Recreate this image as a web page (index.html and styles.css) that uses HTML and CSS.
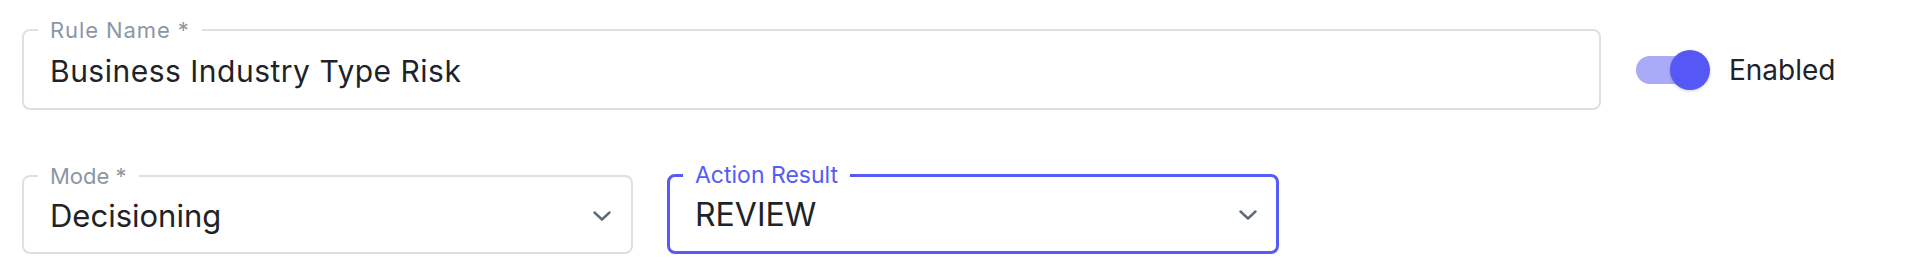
FILE: index.html
```html
<!DOCTYPE html>
<html lang="en">
<head>
  <meta charset="UTF-8">
  <meta name="viewport" content="width=device-width, initial-scale=1.0">
  <title>Rule settings</title>
  <link rel="stylesheet" href="styles.css">
</head>
<body>
  <div class="form">
    <div class="row">
      <fieldset class="field field-name">
        <legend>Rule Name *</legend>
        <div class="field-body">
          <span class="value">Business Industry Type Risk</span>
        </div>
      </fieldset>
      <label class="switch">
        <span class="track"><span class="knob"></span></span>
        <span class="switch-label">Enabled</span>
      </label>
    </div>

    <div class="row row-selects">
      <fieldset class="field field-select">
        <legend>Mode *</legend>
        <div class="field-body">
          <span class="value">Decisioning</span>
          <svg class="chevron" width="18" height="10" viewBox="0 0 18 10"><path d="M1.5 1.5 L9 8.5 L16.5 1.5" fill="none" stroke="#5f6b7a" stroke-width="2.4" stroke-linecap="round" stroke-linejoin="round"/></svg>
        </div>
      </fieldset>
      <fieldset class="field field-select focused">
        <legend>Action Result</legend>
        <div class="field-body">
          <span class="value">REVIEW</span>
          <svg class="chevron" width="18" height="10" viewBox="0 0 18 10"><path d="M1.5 1.5 L9 8.5 L16.5 1.5" fill="none" stroke="#5f6b7a" stroke-width="2.4" stroke-linecap="round" stroke-linejoin="round"/></svg>
        </div>
      </fieldset>
    </div>
  </div>
</body>
</html>
```

FILE: styles.css
```css
body, html {
  margin: 0;
  background: #ffffff;
  font-family: "Inter", "Noto Sans", sans-serif;
  color: #1e2329;
}

.form {
  padding: 20px 22px 0 22px;
}

.row {
  display: flex;
  align-items: center;
}

.row-selects {
  margin-top: 53px;
  gap: 34px;
}

.field {
  margin: 0;
  padding: 0 14px;
  border: 2px solid #dde1e6;
  border-radius: 8px;
  min-width: 0;
}

.field legend {
  padding: 0 12px;
  font-size: 22px;
  line-height: 20px;
  letter-spacing: 0.9px;
  color: #8c96a5;
}

.field-body {
  display: flex;
  align-items: center;
  padding: 14px 12px 20px 12px;
}

.value {
  flex: 1;
  font-size: 30px;
  line-height: 34px;
  letter-spacing: 0.5px;
}

.field-name {
  width: 1579px;
  box-sizing: border-box;
}

.field-select {
  width: 611px;
  box-sizing: border-box;
}

.field-select legend {
  font-size: 22px;
  line-height: 24px;
  letter-spacing: 0;
}

.field-select .value {
  font-size: 31px;
  line-height: 38px;
  letter-spacing: 0;
}

.field-select .field-body {
  padding: 9px 6px 17px 12px;
}

.focused {
  width: 612px;
  border: 3px solid #575bf6;
  padding: 0 13px;
}

.focused legend {
  font-size: 23px;
  color: #575bf6;
}

.focused .value {
  font-size: 32px;
}

.chevron {
  display: block;
}

/* toggle */
.switch {
  display: flex;
  align-items: center;
  margin-left: 35px;
  margin-top: 10px;
}

.track {
  position: relative;
  width: 64px;
  height: 28px;
  border-radius: 14px;
  background: #a9abf8;
}

.knob {
  position: absolute;
  top: -6px;
  right: -10px;
  width: 40px;
  height: 40px;
  border-radius: 50%;
  background: #5558f5;
  box-shadow: 0 1px 3px rgba(0, 0, 0, 0.2);
}

.switch-label {
  margin-left: 29px;
  font-size: 28px;
  line-height: 34px;
}
```
